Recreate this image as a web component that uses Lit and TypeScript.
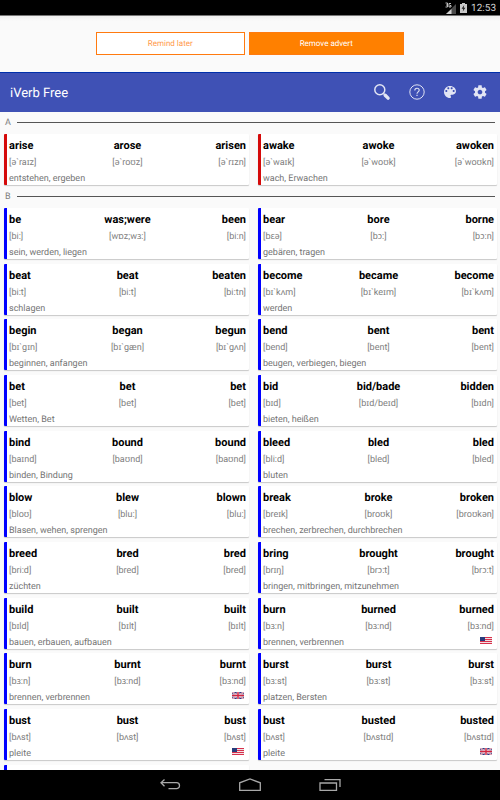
import { LitElement, html, css, svg } from "lit";
import { customElement, property } from "lit/decorators.js";

type Flag = "us" | "uk";

interface Verb {
  forms: string[];
  sounds: string[];
  meaning: string;
  flag?: Flag;
}

interface Section {
  letter: string;
  tone: "red" | "blue";
  verbs: Verb[];
}

const verb = (forms: string, sounds: string, meaning: string, flag?: Flag): Verb => ({
  forms: forms.split(" "),
  sounds: sounds.split(" ").map((s) => `[${s}]`),
  meaning,
  flag,
});

const pending: Verb = { forms: [], sounds: [], meaning: "" };

const sections: Section[] = [
  {
    letter: "A",
    tone: "red",
    verbs: [
      verb("arise arose arisen", "ə`raɪz ə`roʊz ə`rɪzn", "entstehen, ergeben"),
      verb("awake awoke awoken", "ə`waɪk ə`woʊk ə`woʊkn", "wach, Erwachen"),
    ],
  },
  {
    letter: "B",
    tone: "blue",
    verbs: [
      verb("be was;were been", "bi: wɒz;wɜ: bi:n", "sein, werden, liegen"),
      verb("bear bore borne", "bɛə bɔ: bɔ:n", "gebären, tragen"),
      verb("beat beat beaten", "bi:t bi:t bi:tn", "schlagen"),
      verb("become became become", "bɪ`kʌm bɪ`keɪm bɪ`kʌm", "werden"),
      verb("begin began begun", "bɪ`gɪn bɪ`gæn bɪ`gʌn", "beginnen, anfangen"),
      verb("bend bent bent", "bend bent bent", "beugen, verbiegen, biegen"),
      verb("bet bet bet", "bet bet bet", "Wetten, Bet"),
      verb("bid bid/bade bidden", "bɪd bɪd/beɪd bɪdn", "bieten, heißen"),
      verb("bind bound bound", "baɪnd baʊnd baʊnd", "binden, Bindung"),
      verb("bleed bled bled", "bli:d bled bled", "bluten"),
      verb("blow blew blown", "bloʊ blu: blu:", "Blasen, wehen, sprengen"),
      verb("break broke broken", "breɪk broʊk broʊkən", "brechen, zerbrechen, durchbrechen"),
      verb("breed bred bred", "bri:d bred bred", "züchten"),
      verb("bring brought brought", "brɪŋ brɔ:t brɔ:t", "bringen, mitbringen, mitzunehmen"),
      verb("build built built", "bɪld bɪlt bɪlt", "bauen, erbauen, aufbauen"),
      verb("burn burned burned", "bɜ:n bɜ:nd bɜ:nd", "brennen, verbrennen", "us"),
      verb("burn burnt burnt", "bɜ:n bɜ:nd bɜ:nd", "brennen, verbrennen", "uk"),
      verb("burst burst burst", "bɜ:st bɜ:st bɜ:st", "platzen, Bersten"),
      verb("bust bust bust", "bʌst bʌst bʌst", "pleite", "us"),
      verb("bust busted busted", "bʌst bʌstɪd bʌstɪd", "pleite", "uk"),
      pending,
    ],
  },
];

const usFlag = svg`
  <rect width="12" height="7" fill="#f0dfe2"/>
  <path d="M0 .5h12M0 2.5h12M0 4.5h12M0 6.5h12" stroke="#d8304c"/>
  <rect width="5" height="4" fill="#283c7c"/>`;

const ukFlag = svg`
  <rect width="12" height="7" fill="#27357e"/>
  <path d="M0 0l12 7M12 0L0 7" stroke="#e4dfea" stroke-width="1.6"/>
  <path d="M0 0l12 7M12 0L0 7" stroke="#cc3550" stroke-width=".5"/>
  <path d="M6 0v7M0 3.5h12" stroke="#f3e6ec" stroke-width="2.6"/>
  <path d="M6 0v7M0 3.5h12" stroke="#d02440" stroke-width="1.4"/>`;

@customElement("verb-card")
export class VerbCard extends LitElement {
  @property({ attribute: false }) verb!: Verb;
  @property() tone = "blue";

  static styles = css`
    :host {
      display: block;
    }
    .card {
      box-sizing: border-box;
      height: 51px;
      padding: 3px 3px 0 2px;
      border-left: 3px solid #00f;
      border-radius: 1px;
      background: #fff;
      box-shadow: 0 1px 1px rgba(0, 0, 0, 0.2);
    }
    .red {
      border-left-color: #d50a0a;
    }
    .row {
      display: grid;
      grid-template-columns: 1fr auto 1fr;
      white-space: nowrap;
    }
    .row > :last-child {
      text-align: right;
    }
    .forms {
      font-size: 11px;
      font-weight: 700;
      line-height: 18px;
      color: #000;
    }
    .sounds {
      font-size: 9px;
      line-height: 16px;
      color: #808080;
    }
    .note {
      display: flex;
      justify-content: space-between;
      align-items: center;
      padding-right: 2px;
      font-size: 9px;
      line-height: 16px;
      color: #757575;
    }
    .flag {
      width: 12px;
      height: 7px;
      margin-bottom: 5px;
    }
  `;

  render() {
    const { forms, sounds, meaning, flag } = this.verb;
    return html`
      <article class="card ${this.tone}">
        <div class="row forms">${forms.map((f) => html`<span>${f}</span>`)}</div>
        <div class="row sounds">${sounds.map((s) => html`<span>${s}</span>`)}</div>
        <div class="note">
          <span>${meaning}</span>
          ${flag
            ? html`<svg class="flag" viewBox="0 0 12 7" role="img" aria-label=${flag.toUpperCase()}>
                ${flag === "us" ? usFlag : ukFlag}
              </svg>`
            : ""}
        </div>
      </article>
    `;
  }
}

@customElement("app-root")
export class AppRoot extends LitElement {
  static styles = css`
    :host {
      display: flex;
      flex-direction: column;
      height: 100vh;
      overflow: hidden;
      background: #fafafa;
      font-family: Roboto, "Noto Sans", "DejaVu Sans", sans-serif;
      text-rendering: geometricPrecision;
    }
    button {
      margin: 0;
      font-family: inherit;
      text-rendering: inherit;
      cursor: pointer;
    }
    .status {
      display: flex;
      flex: none;
      justify-content: flex-end;
      align-items: center;
      height: 15px;
      padding-right: 4px;
      background: #000;
      color: #d0d0d0;
      font-size: 10px;
      line-height: 12px;
    }
    .status time {
      padding-top: 2px;
    }
    .signal {
      width: 12px;
      height: 12px;
      margin-right: 3px;
    }
    .battery {
      width: 7px;
      height: 10px;
      margin-right: 4px;
    }
    .advert {
      display: flex;
      flex: none;
      justify-content: center;
      gap: 4px;
      padding: 16px 96px 17px;
      border-top: 1px solid #777;
      background: linear-gradient(#efefef, #fafafa 5px);
    }
    .remind,
    .remove {
      height: 23px;
      padding: 0;
      border: 1px solid #ff7a0f;
      font-size: 8px;
      line-height: 20px;
    }
    .remind {
      flex: 149;
      background: #fff;
      color: #ff9a4a;
    }
    .remove {
      flex: 156;
      background: #ff8000;
      color: #fff;
    }
    .toolbar {
      display: flex;
      flex: none;
      align-items: center;
      box-sizing: border-box;
      height: 40px;
      padding: 0 12px 0 10px;
      border-top: 1px solid #0030ab;
      background: #3f51b5;
      color: #fff;
    }
    .title {
      flex: 1;
      margin: 0;
      padding-top: 2px;
      font-size: 13px;
      font-weight: 400;
      line-height: 20px;
    }
    .actions {
      display: flex;
      align-items: center;
      gap: 14px;
      padding-bottom: 2px;
    }
    .action {
      display: flex;
      justify-content: center;
      width: 16px;
      padding: 0;
      border: 0;
      background: none;
    }
    .wide {
      width: 22px;
    }
    .action svg {
      width: 16px;
      height: 16px;
      overflow: visible;
    }
    .list {
      flex: 1;
      min-height: 0;
      overflow: hidden;
    }
    .letter {
      display: flex;
      align-items: center;
      gap: 6px;
      height: 22px;
      margin: 0;
      padding: 0 5px;
      font-size: 9px;
      font-weight: 400;
      line-height: 22px;
      color: #808080;
    }
    .letter::after {
      content: "";
      flex: 1;
      height: 1px;
      margin-bottom: 2px;
      background: #555;
    }
    .cards {
      display: grid;
      grid-template-columns: 245fr 239fr;
      column-gap: 9px;
      padding: 0 3px 0 4px;
    }
    .cards verb-card {
      margin-bottom: 5px;
    }
    .cards verb-card:nth-child(6n + 3),
    .cards verb-card:nth-child(6n + 4) {
      margin-bottom: 4px;
    }
    .cards.red verb-card {
      margin-bottom: 1px;
    }
    .nav {
      display: flex;
      flex: none;
      justify-content: center;
      align-items: center;
      gap: 56px;
      height: 30px;
      background: #000;
    }
    .key {
      display: flex;
      padding: 0;
      border: 0;
      background: none;
    }
    .key svg {
      width: 24px;
      height: 16px;
    }
  `;

  render() {
    return html`
      <div class="status">
        <svg class="signal" viewBox="0 0 12 12" aria-hidden="true">
          <path d="M11 2v10H1z" fill="#4a4a4a" />
          <path d="M6.500 7v5H1z" fill="#d0d0d0" />
          <path d="M.5 1h2v4h-2M1 3h1.500M6 1.500H4v3.500h2V3.500H5" fill="none" stroke="#d0d0d0" stroke-width=".9" />
        </svg>
        <svg class="battery" viewBox="0 0 7 10" aria-hidden="true">
          <path d="M0 1h2V0h3v1h2v9H0z" fill="#c8c8c8" />
          <path d="M4.200 2L1.600 5.800h1.600L2.800 8.600l2.600-3.800H3.800z" fill="#222" />
        </svg>
        <time>12:53</time>
      </div>

      <div class="advert">
        <button class="remind">Remind later</button>
        <button class="remove">Remove advert</button>
      </div>

      <header class="toolbar">
        <h1 class="title">iVerb Free</h1>
        <div class="actions">
          <button class="action wide" aria-label="Search">
            <svg viewBox="-1 0 16 16" fill="none" stroke="#e2e5f4">
              <circle cx="5.800" cy="5.800" r="5" stroke-width="1.500" />
              <path d="M9.500 9.500l1.800 1.800" stroke-width="1.500" />
              <path d="M11.200 11.200l2.900 2.900" stroke-width="3.400" stroke-linecap="round" />
            </svg>
          </button>
          <button class="action wide" aria-label="Help">
            <svg viewBox="0 0 16 16" fill="none" stroke="#dfe2f3">
              <circle cx="8" cy="8" r="7.200" stroke-width="1" />
              <path d="M5.800 6.400c0-1.400 1-2.200 2.200-2.200s2.200.8 2.200 2c0 1.600-2.200 1.700-2.200 3.500" stroke-width="1.100" />
              <path d="M8 10.800v1.300" stroke-width="1.200" />
            </svg>
          </button>
          <button class="action" aria-label="Colours">
            <svg viewBox="0 0 24 24" fill="#e2e5f4">
              <path d="M12 3c-4.970 0-9 4.030-9 9s4.030 9 9 9c.83 0 1.500-.67 1.500-1.500 0-.39-.15-.74-.39-1.010-.23-.26-.38-.61-.38-.99 0-.83.67-1.500 1.500-1.500H16c2.760 0 5-2.240 5-5 0-4.420-4.030-8-9-8zm-5.500 9c-.83 0-1.500-.67-1.500-1.500S5.670 9 6.500 9 8 9.670 8 10.500 7.330 12 6.500 12zm3-4C8.670 8 8 7.330 8 6.500S8.670 5 9.500 5s1.500.67 1.500 1.500S10.330 8 9.500 8zm5 0c-.83 0-1.500-.67-1.500-1.500S13.670 5 14.500 5s1.500.67 1.500 1.500S15.330 8 14.500 8zm3 4c-.83 0-1.500-.67-1.500-1.500S16.670 9 17.500 9s1.500.67 1.500 1.500-.67 1.500-1.500 1.500z" />
            </svg>
          </button>
          <button class="action" aria-label="Settings">
            <svg viewBox="0 0 24 24" fill="#e2e5f4">
              <path d="M19.430 12.980c.04-.32.07-.64.07-.98s-.03-.66-.07-.98l2.110-1.650c.19-.15.24-.42.12-.64l-2-3.460c-.12-.22-.39-.3-.61-.22l-2.490 1c-.52-.4-1.080-.73-1.690-.98l-.38-2.650C14.460 2.180 14.250 2 14 2h-4c-.25 0-.46.18-.49.42l-.38 2.650c-.61.25-1.170.59-1.690.98l-2.490-1c-.23-.09-.49 0-.61.22l-2 3.460c-.13.22-.07.49.12.64l2.110 1.650c-.04.32-.07.65-.07.98s.03.66.07.98l-2.110 1.650c-.19.15-.24.42-.12.64l2 3.460c.12.22.39.3.61.22l2.490-1c.52.4 1.080.73 1.690.98l.38 2.650c.03.24.24.42.49.42h4c.25 0 .46-.18.49-.42l.38-2.650c.61-.25 1.170-.59 1.690-.98l2.490 1c.23.09.49 0 .61-.22l2-3.460c.12-.22.07-.49-.12-.64l-2.110-1.650zM12 15.500c-1.930 0-3.500-1.570-3.500-3.500s1.570-3.500 3.500-3.500 3.500 1.570 3.500 3.500-1.570 3.500-3.500 3.500z" />
            </svg>
          </button>
        </div>
      </header>

      <main class="list">
        ${sections.map(
          (s) => html`
            <section>
              <h2 class="letter">${s.letter}</h2>
              <div class="cards ${s.tone}">
                ${s.verbs.map((v) => html`<verb-card .verb=${v} tone=${s.tone}></verb-card>`)}
              </div>
            </section>
          `
        )}
      </main>

      <nav class="nav">
        <button class="key" aria-label="Back">
          <svg viewBox="0 0 24 16" fill="none" stroke="#a8a8a8" stroke-width="1.300">
            <path d="M6.500 2.500L3 5.700l3.500 3.500M3.500 5.700h15a3 3 0 0 1 3 3 3 3 0 0 1-3 3H10.500" />
          </svg>
        </button>
        <button class="key" aria-label="Home">
          <svg viewBox="0 0 24 16" fill="none" stroke="#a8a8a8" stroke-width="1.300">
            <path d="M1.700 13.300V5.800L12 2l10.300 3.800v7.500z" />
          </svg>
        </button>
        <button class="key" aria-label="Recent apps">
          <svg viewBox="0 0 24 16" fill="none" stroke="#a8a8a8" stroke-width="1.300">
            <path d="M2 6h16.500v7.300H2zM6.500 2.700H22v7.300" />
          </svg>
        </button>
      </nav>
    `;
  }
}
